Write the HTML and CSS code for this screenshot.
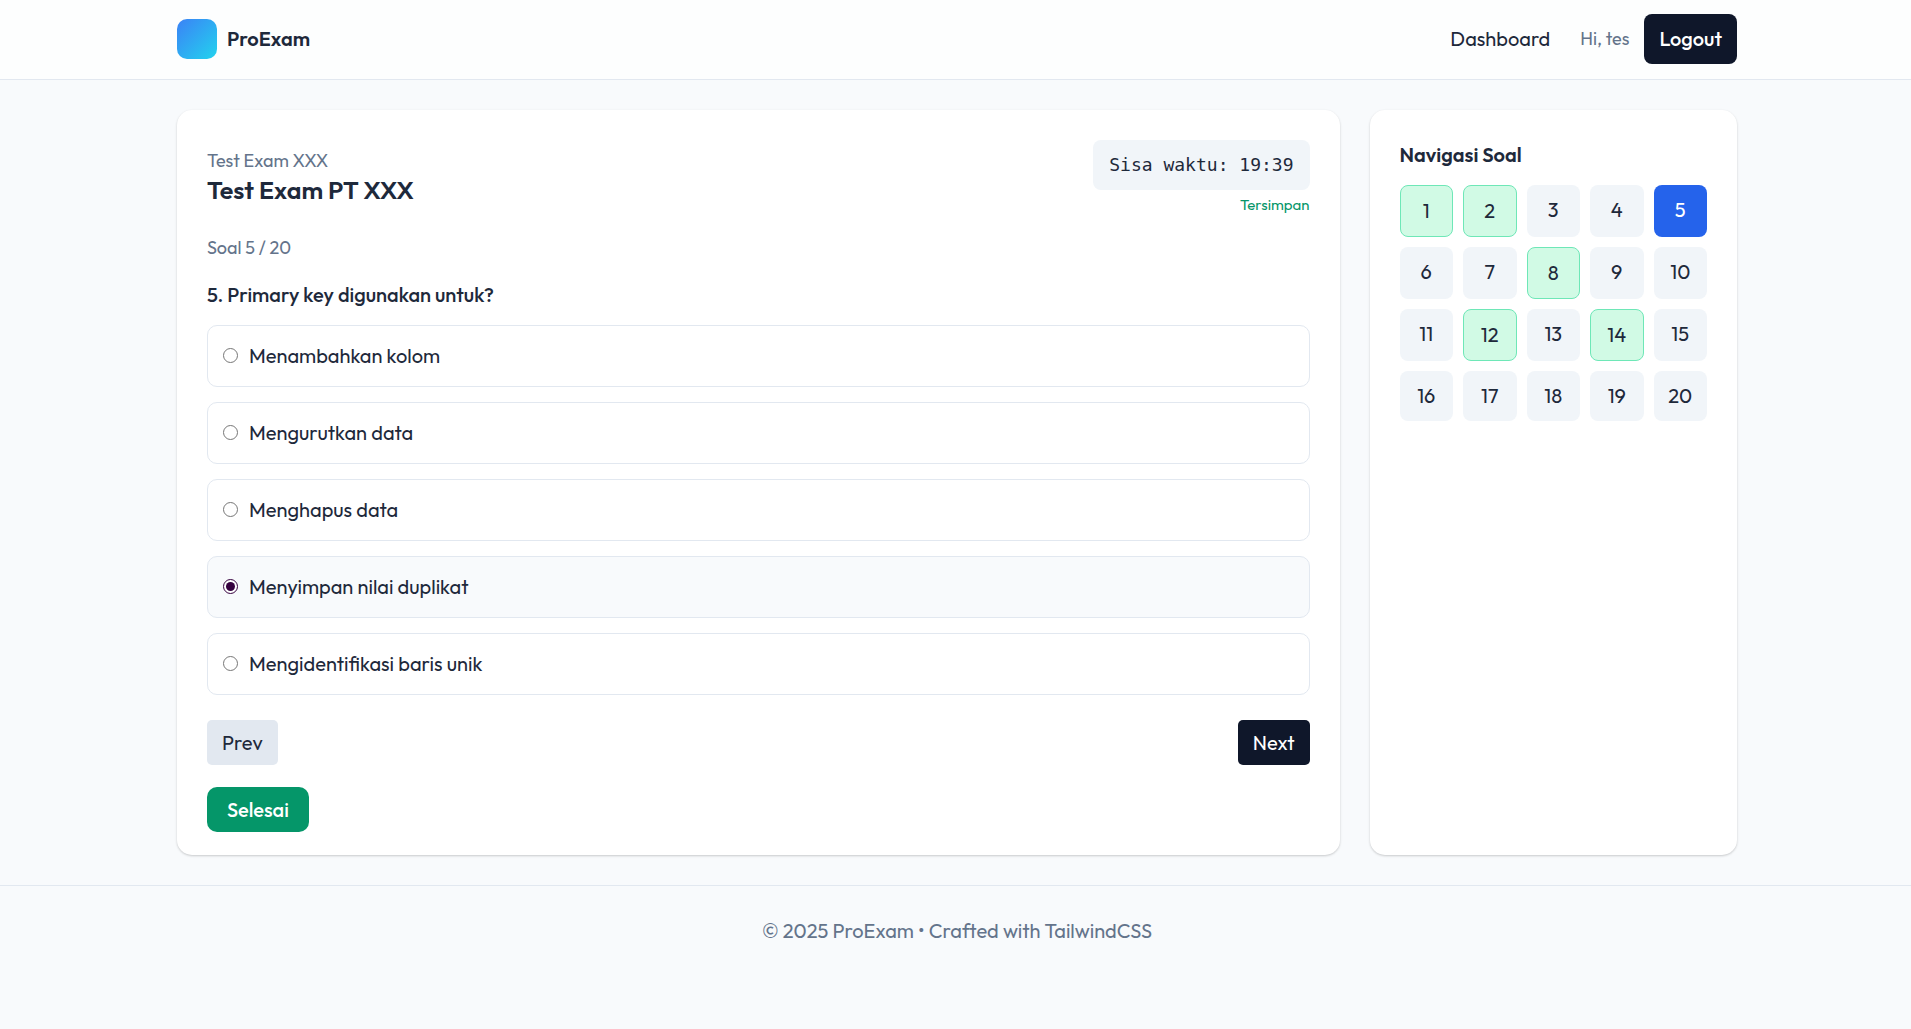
FILE: index.html
```
<!DOCTYPE html>
<html lang="id">
<head>
<meta charset="utf-8">
<meta name="viewport" content="width=device-width, initial-scale=1">
<title>ProExam</title>
<link rel="stylesheet" href="styles.css">
</head>
<body>
<header class="site-header">
  <div class="container header-row">
    <a class="brand" href="#"><span class="brand-mark"></span><span>ProExam</span></a>
    <nav class="main-nav">
      <a class="nav-link" href="#">Dashboard</a>
      <div class="account">
        <span class="greeting">Hi, tes</span>
        <button class="logout" type="button">Logout</button>
      </div>
    </nav>
  </div>
</header>
<main class="container exam-grid">
  <section class="card exam">
    <div class="exam-head">
      <div>
        <p class="exam-name">Test Exam XXX</p>
        <h1 class="exam-title">Test Exam PT XXX</h1>
      </div>
      <div class="status">
        <div class="timer">Sisa waktu: 19:39</div>
        <p class="saved">Tersimpan</p>
      </div>
    </div>
    <p class="progress">Soal 5 / 20</p>
    <form>
      <fieldset class="question">
        <legend class="question-text">5. Primary key digunakan untuk?</legend>
        <label class="option"><input type="radio" name="answer"><span>Menambahkan kolom</span></label>
        <label class="option"><input type="radio" name="answer"><span>Mengurutkan data</span></label>
        <label class="option"><input type="radio" name="answer"><span>Menghapus data</span></label>
        <label class="option selected"><input type="radio" name="answer" checked><span>Menyimpan nilai duplikat</span></label>
        <label class="option"><input type="radio" name="answer"><span>Mengidentifikasi baris unik</span></label>
      </fieldset>
      <div class="pager">
        <button class="btn btn-prev" type="button">Prev</button>
        <button class="btn btn-next" type="button">Next</button>
      </div>
      <button class="btn btn-finish" type="submit">Selesai</button>
    </form>
  </section>
  <aside class="card">
    <h2 class="nav-title">Navigasi Soal</h2>
    <nav class="numbers">
      <a class="number answered" href="#">1</a>
      <a class="number answered" href="#">2</a>
      <a class="number" href="#">3</a>
      <a class="number" href="#">4</a>
      <a class="number current" href="#" aria-current="page">5</a>
      <a class="number" href="#">6</a>
      <a class="number" href="#">7</a>
      <a class="number answered" href="#">8</a>
      <a class="number" href="#">9</a>
      <a class="number" href="#">10</a>
      <a class="number" href="#">11</a>
      <a class="number answered" href="#">12</a>
      <a class="number" href="#">13</a>
      <a class="number answered" href="#">14</a>
      <a class="number" href="#">15</a>
      <a class="number" href="#">16</a>
      <a class="number" href="#">17</a>
      <a class="number" href="#">18</a>
      <a class="number" href="#">19</a>
      <a class="number" href="#">20</a>
    </nav>
  </aside>
</main>
<footer class="site-footer">
  <div class="container footer-text">© 2025 ProExam • Crafted with TailwindCSS</div>
</footer>
</body>
</html>
```
FILE: styles.css
```
* { box-sizing: border-box; }

body {
  margin: 0;
  background: #f8fafc;
  color: #1e293b;
  font: 400 20px/30px Outfit, Lato, "Liberation Sans", sans-serif;
}

h1, h2, p { margin: 0; }
a { color: inherit; text-decoration: none; }
button { border: 0; font: inherit; cursor: pointer; }

.container {
  max-width: 1603px;
  margin: 0 auto;
  padding: 0 20px 0 23px;
}

/* Header */
.site-header {
  height: 80px;
  background: #fdfefe;
  border-bottom: 1px solid #e2e8f0;
}
.header-row {
  height: 78px;
  display: flex;
  align-items: center;
  justify-content: space-between;
}
.brand {
  display: flex;
  align-items: center;
  gap: 10px;
  font-weight: 600;
}
.brand-mark {
  width: 40px;
  height: 40px;
  border-radius: 10px;
  background: linear-gradient(135deg, #3b82f6, #22d3ee);
}
.main-nav { display: flex; align-items: center; gap: 30px; }
.account { display: flex; align-items: center; gap: 15px; }
.greeting { color: #64748b; font-size: 18px; }
.logout {
  padding: 10px 15px;
  border-radius: 8px;
  background: #0f172a;
  color: #fff;
  font-weight: 500;
}

/* Cards */
.exam-grid {
  display: grid;
  grid-template-columns: repeat(4, minmax(0, 1fr));
  gap: 30px;
  padding-top: 30px;
  padding-bottom: 30px;
}
.card {
  padding: 30px;
  border-radius: 15px;
  background: #fff;
  box-shadow: 0 1px 3px rgba(0, 0, 0, .1), 0 1px 2px rgba(0, 0, 0, .1);
}
.exam { grid-column: span 3; padding-bottom: 23px; }

.exam-head {
  display: flex;
  align-items: center;
  justify-content: space-between;
}
.exam-name, .progress { color: #64748b; font-size: 18px; line-height: 25px; }
.exam-title { font-size: 25px; line-height: 35px; font-weight: 600; }
.status { text-align: right; }
.timer {
  padding: 10px 16px;
  border-radius: 8px;
  background: #f1f5f9;
  font-family: "DejaVu Sans Mono", monospace;
  font-size: 18px;
}
.saved { margin-top: 5px; color: #059669; font-size: 15px; line-height: 20px; }
.progress { margin: 20px 0; }

/* Answers */
.question {
  display: flex;
  flex-direction: column;
  gap: 15px;
  margin: 0;
  padding: 0;
  border: 0;
}
.question-text { margin-bottom: 15px; padding: 0; font-weight: 500; }
.option {
  display: flex;
  align-items: center;
  gap: 11px;
  padding: 15px;
  border: 1px solid #e2e8f0;
  border-radius: 10px;
  cursor: pointer;
}
.option.selected { background: #f8fafc; }
.option input { width: 15px; height: 15px; margin: 0 0 2px; accent-color: #35003f; }

.pager {
  display: flex;
  justify-content: space-between;
  margin: 25px 0 22px;
}
.btn { height: 45px; padding: 0 15px; border-radius: 5px; color: #fff; }
.btn-prev { background: #e2e8f0; color: #1e293b; }
.btn-next { background: #0f172a; }
.btn-finish { display: block; padding: 0 20px; border-radius: 10px; background: #059669; font-weight: 500; }

/* Question navigation */
.nav-title { margin-bottom: 15px; font-size: 20px; line-height: 30px; font-weight: 600; }
.numbers {
  display: grid;
  grid-template-columns: repeat(5, minmax(0, 1fr));
  gap: 10px;
}
.number {
  padding: 10px 0;
  border-radius: 8px;
  background: #f1f5f9;
  text-align: center;
}
.number.answered { border: 1px solid #6ee7b7; background: #d1fae5; }
.number.current { background: #2563eb; color: #fff; }

/* Footer */
.site-footer { border-top: 1px solid #e2e8f0; color: #64748b; }
.footer-text { padding-top: 30px; padding-bottom: 30px; text-align: center; }
```
